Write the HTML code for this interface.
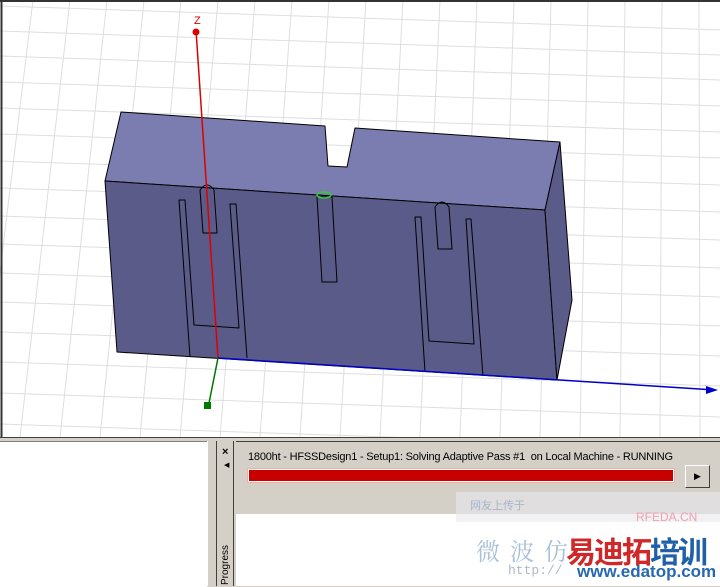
<!DOCTYPE html>
<html><head><style>
body{margin:0;width:720px;height:586px;overflow:hidden;background:#d4d0c8;font-family:"Liberation Sans",sans-serif;position:relative}
.a{position:absolute}
</style></head><body>
<svg class="a" style="left:0;top:0" width="720" height="438">
<rect x="0" y="0" width="720" height="437" fill="#fff"/>
<g stroke="#dedede" stroke-width="1">
<line x1="33" y1="0" x2="-20" y2="437"/><line x1="70" y1="0" x2="20" y2="437"/><line x1="107" y1="0" x2="60" y2="437"/>
<line x1="144" y1="0" x2="100" y2="437"/><line x1="181" y1="0" x2="140" y2="437"/><line x1="218" y1="0" x2="180" y2="437"/>
<line x1="255" y1="0" x2="220" y2="437"/><line x1="292" y1="0" x2="260" y2="437"/><line x1="329" y1="0" x2="300" y2="437"/>
<line x1="366" y1="0" x2="340" y2="437"/><line x1="403" y1="0" x2="380" y2="437"/><line x1="440" y1="0" x2="420" y2="437"/>
<line x1="477" y1="0" x2="460" y2="437"/><line x1="514" y1="0" x2="500" y2="437"/><line x1="551" y1="0" x2="540" y2="437"/>
<line x1="588" y1="0" x2="580" y2="437"/><line x1="625" y1="0" x2="620" y2="437"/><line x1="662" y1="0" x2="660" y2="437"/>
<line x1="699" y1="0" x2="700" y2="437"/><line x1="736" y1="0" x2="740" y2="437"/>
<line x1="0" y1="6" x2="720" y2="30"/><line x1="0" y1="31" x2="720" y2="55"/><line x1="0" y1="56" x2="720" y2="80"/>
<line x1="0" y1="82" x2="720" y2="106"/><line x1="0" y1="108" x2="720" y2="132"/><line x1="0" y1="134" x2="720" y2="158"/>
<line x1="0" y1="161" x2="720" y2="185"/><line x1="0" y1="188" x2="720" y2="212"/><line x1="0" y1="216" x2="720" y2="240"/>
<line x1="0" y1="244" x2="720" y2="268"/><line x1="0" y1="273" x2="720" y2="297"/><line x1="0" y1="302" x2="720" y2="326"/>
<line x1="0" y1="332" x2="720" y2="356"/><line x1="0" y1="362" x2="720" y2="386"/><line x1="0" y1="393" x2="720" y2="417"/>
<line x1="0" y1="424" x2="720" y2="448"/>
</g>
<line x1="0" y1="1" x2="720" y2="1" stroke="#333" stroke-width="2"/>
<line x1="1.5" y1="0" x2="1.5" y2="437" stroke="#333" stroke-width="2"/>
<g stroke="#000" stroke-width="1" stroke-linejoin="round">
<polygon points="121,112 325,126 328,166 347,167 355,128 560,142 545,210 105,181" fill="#7b7cb0"/>
<polygon points="105,181 545,210 557,380 117,352" fill="#5b5b8a"/>
<polygon points="560,142 572,300 557,380 545,210" fill="#5b5b8a"/>
<g fill="none">
<polyline points="190,357 179,200 185,200 194,325 239,328 230,204 236,204 247,358"/>
<polyline points="425,372 415,217 421,217 429,341 474,344 466,219 471,219 483,376"/>
<path d="M203,233 L200,190 Q207,180 214,190 L217,233 Z"/>
<path d="M322,282 L317,197 L332,197 L337,282 Z"/>
<path d="M438,249 L435,207 Q442,197 449,207 L452,249 Z"/>
</g></g>
<ellipse cx="324" cy="195" rx="7" ry="3" fill="none" stroke="#3c3" stroke-width="1.5"/>
<line x1="196" y1="30" x2="218" y2="358" stroke="#d00" stroke-width="1.5"/>
<circle cx="196" cy="32" r="3.5" fill="#d00"/>
<text x="194" y="24" font-size="11" fill="#d00">Z</text>
<line x1="218" y1="358" x2="715" y2="390" stroke="#0000c8" stroke-width="1.5"/>
<polygon points="718,390 706,386 706,394" fill="#0000c8"/>
<line x1="218" y1="358" x2="208" y2="408" stroke="#070" stroke-width="1.5"/>
<rect x="204" y="402" width="7" height="7" fill="#070"/>
</svg>
<div class="a" style="left:0;top:437px;width:720px;height:1px;background:#404040"></div>
<div class="a" style="left:0;top:441px;width:207px;height:145px;background:#fff;border-top:1px solid #808080"></div>
<div class="a" style="left:207px;top:441px;width:1px;height:145px;background:#fff"></div>
<div class="a" style="left:216px;top:441px;width:1px;height:145px;background:#404040"></div>
<div class="a" style="left:233px;top:441px;width:1px;height:145px;background:#404040"></div>
<div class="a" style="left:222px;top:446px;font-size:11px;font-weight:bold">×</div>
<div class="a" style="left:224px;top:461px;font-size:7px">◀</div>
<div class="a" style="left:220px;top:585px;font-size:10px;transform:rotate(-90deg);transform-origin:0 0">Progress</div>
<div class="a" style="left:236px;top:441px;width:484px;height:1px;background:#404040"></div>
<div class="a" style="left:236px;top:514px;width:484px;height:72px;background:#fff"></div>
<div class="a" style="left:248px;top:451px;font-size:11px;color:#000;letter-spacing:-0.2px">1800ht - HFSSDesign1 - Setup1: Solving Adaptive Pass #1&nbsp; on Local Machine - RUNNING</div>
<div class="a" style="left:247px;top:468px;width:428px;height:15px;background:#fff;border:1px solid #f0b0a0;box-sizing:border-box"></div>
<div class="a" style="left:249px;top:470px;width:424px;height:11px;background:#c80000"></div>
<div class="a" style="left:685px;top:465px;width:25px;height:23px;background:#d4d0c8;border:1px solid;border-color:#fff #404040 #404040 #fff;box-sizing:border-box;font-size:9px;text-align:center;line-height:21px">▶</div>
<div class="a" style="left:456px;top:492px;width:264px;height:30px;background:#e8e8ec;opacity:.6"></div>
<div class="a" style="left:470px;top:497px;font-size:11px;color:#a8b4cc;font-family:'Noto Sans CJK SC',sans-serif">网友上传于</div>
<div class="a" style="left:636px;top:510px;font-size:12px;color:#f0a0b0">RFEDA.CN</div>
<div class="a" style="left:476px;top:532px;font-size:24px;color:#a8c0d8;letter-spacing:10px;font-family:'Noto Serif CJK SC',serif">微波仿</div>
<div class="a" style="left:566px;top:528px;font-size:30px;font-weight:bold;color:#d02828;font-family:'Noto Sans CJK SC',sans-serif;letter-spacing:-2px">易迪拓<span style="color:#2060a8">培训</span></div>
<div class="a" style="left:508px;top:563px;font-size:13px;color:#b0b8c8;font-family:'Liberation Mono',monospace">http://</div>
<div class="a" style="left:577px;top:562px;font-size:17px;font-weight:bold;color:#2868b0">www.edatop.com</div>
</body></html>
